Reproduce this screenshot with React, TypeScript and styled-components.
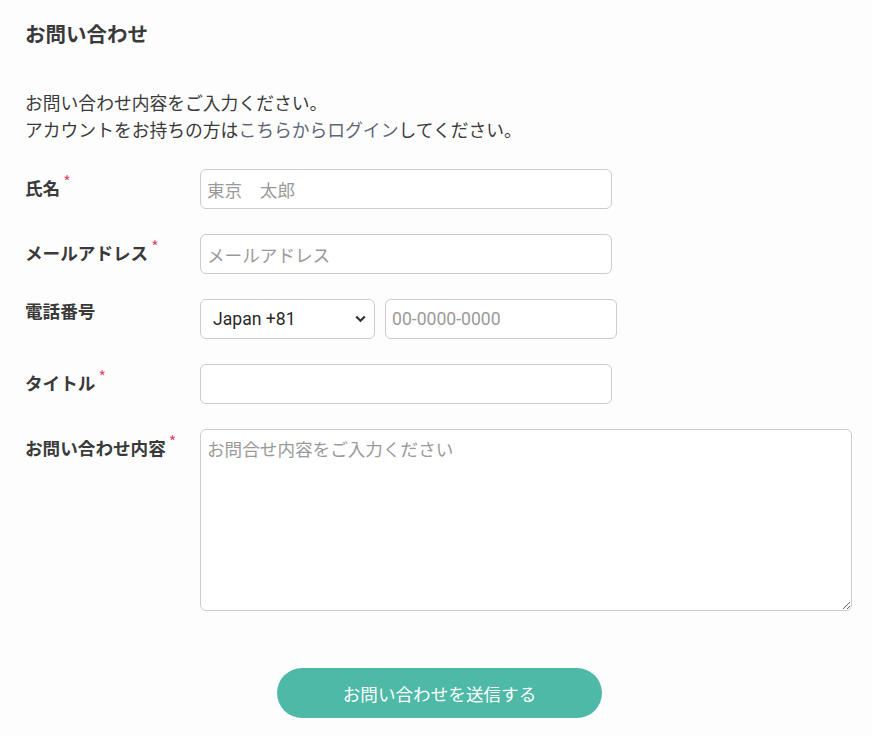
import React from "react";
import styled, { createGlobalStyle } from "styled-components";

const GlobalStyle = createGlobalStyle`
  body {
    margin: 0;
    background: #fdfdfd;
    color: #3a3a3a;
    font-family: "Noto Sans CJK JP", "Noto Sans", Roboto, sans-serif;
  }
`;

const Page = styled.div`
  padding: 18px 20px 18px 25px;
`;

const Title = styled.h1`
  margin: 0;
  font-size: 20.5px;
  line-height: 30px;
  font-weight: 700;
  color: #3a3a3a;
`;

const Intro = styled.p`
  margin: 41px 0 0;
  font-size: 17.8px;
  line-height: 27px;
  color: #3a3a3a;
`;

const LoginLink = styled.a`
  color: #5f6779;
  text-decoration: none;
`;

const Form = styled.form`
  margin-top: 26px;
  display: flex;
  flex-direction: column;
  gap: 25px;
`;

const Row = styled.div`
  display: flex;
  align-items: flex-start;
`;

const Label = styled.label`
  width: 175px;
  flex-shrink: 0;
  padding-top: 0;
  font-size: 17.6px;
  line-height: 24px;
  font-weight: 700;
  color: #3a3a3a;
`;

const Required = styled.sup`
  color: #e0476a;
  font-size: 16px;
  font-weight: 400;
  margin-left: 3px;
`;

const fieldBase = `
  box-sizing: border-box;
  height: 40px;
  border: 1px solid #cccccc;
  border-radius: 6px;
  background: #ffffff;
  font-family: "Noto Sans CJK JP", Roboto, sans-serif;
  font-size: 17.6px;
  color: #333333;
  outline: none;
  &::placeholder {
    color: #9a9a9a;
  }
`;

const TextInput = styled.input<{ $width: number }>`
  ${fieldBase}
  width: ${(p) => p.$width}px;
  padding: 0 6px;
`;

const PhoneGroup = styled.div`
  display: flex;
  gap: 10px;
`;

const SelectWrap = styled.div`
  position: relative;
  width: 175px;
`;

const Select = styled.select`
  ${fieldBase}
  appearance: none;
  width: 100%;
  padding: 0 30px 0 12px;
  font-family: Roboto, "Noto Sans CJK JP", sans-serif;
  color: #2a2a2a;
`;

const Chevron = styled.svg`
  position: absolute;
  right: 9px;
  top: 16px;
  width: 11px;
  height: 8px;
  pointer-events: none;
`;

const PhoneInput = styled(TextInput)`
  font-family: Roboto, "Noto Sans CJK JP", sans-serif;
`;

const TextArea = styled.textarea`
  ${fieldBase}
  width: 653px;
  height: 182px;
  padding: 6px 6px;
  line-height: 26px;
  resize: vertical;
`;

const Actions = styled.div`
  display: flex;
  justify-content: center;
  margin-top: 32px;
`;

const SubmitButton = styled.button`
  width: 325px;
  height: 50px;
  border: none;
  border-radius: 25px;
  background: #4db9a6;
  color: #ffffff;
  font-family: "Noto Sans CJK JP", sans-serif;
  font-size: 17.6px;
  cursor: pointer;
  margin-left: 2px;
`;

export default function App() {
  return (
    <Page>
      <GlobalStyle />
      <Title>お問い合わせ</Title>
      <Intro>
        お問い合わせ内容をご入力ください。
        <br />
        アカウントをお持ちの方は<LoginLink href="#">こちらからログイン</LoginLink>
        してください。
      </Intro>
      <Form onSubmit={(e) => e.preventDefault()}>
        <Row>
          <Label>
            氏名<Required>*</Required>
          </Label>
          <TextInput $width={412} placeholder="東京　太郎" />
        </Row>
        <Row>
          <Label>
            メールアドレス<Required>*</Required>
          </Label>
          <TextInput $width={412} placeholder="メールアドレス" />
        </Row>
        <Row>
          <Label>電話番号</Label>
          <PhoneGroup>
            <SelectWrap>
              <Select defaultValue="81">
                <option value="81">Japan +81</option>
              </Select>
              <Chevron viewBox="0 0 11 8">
                <path d="M1.2 1.5 L5.5 5.8 L9.8 1.5" fill="none" stroke="#333" strokeWidth="2.2" />
              </Chevron>
            </SelectWrap>
            <PhoneInput $width={232} placeholder="00-0000-0000" />
          </PhoneGroup>
        </Row>
        <Row>
          <Label>
            タイトル<Required>*</Required>
          </Label>
          <TextInput $width={412} />
        </Row>
        <Row>
          <Label>
            お問い合わせ内容<Required>*</Required>
          </Label>
          <TextArea placeholder="お問合せ内容をご入力ください" />
        </Row>
        <Actions>
          <SubmitButton type="submit">お問い合わせを送信する</SubmitButton>
        </Actions>
      </Form>
    </Page>
  );
}
